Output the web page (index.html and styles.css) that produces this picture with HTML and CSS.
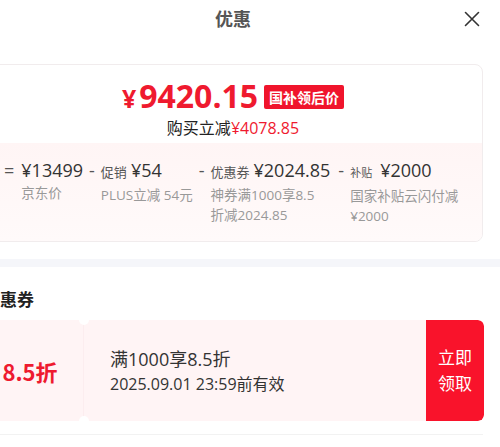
FILE: index.html
```html
<!DOCTYPE html>
<html lang="zh">
<head>
<meta charset="utf-8">
<link rel="stylesheet" href="styles.css">
</head>
<body>
<div class="page">
  <div class="header">
    <span></span>
    <div class="title">优惠</div>
    <button class="close" aria-label="关闭">
      <svg width="16" height="16" viewBox="0 0 16 16"><path d="M1.5 1.5 L14.5 14.5 M14.5 1.5 L1.5 14.5" stroke="#333" stroke-width="1.6" fill="none" stroke-linecap="round"/></svg>
    </button>
  </div>

  <div class="card">
    <div class="card-top">
      <div class="price-line">
        <span class="price"><span class="yen">¥</span>9420.15</span>
        <span class="tag">国补领后价</span>
      </div>
      <div class="buy">购买立减<span class="red">¥4078.85</span></div>
    </div>
    <div class="card-bottom">
      <span class="op">=</span>
      <div class="item">
        <div class="val">¥13499</div>
        <div class="sub">京东价</div>
      </div>
      <span class="op">-</span>
      <div class="item">
        <div class="val"><span class="lbl">促销</span>¥54</div>
        <div class="sub">PLUS立减 54元</div>
      </div>
      <span class="op">-</span>
      <div class="item w3">
        <div class="val"><span class="lbl">优惠券</span>¥2024.85</div>
        <div class="sub">神券满1000享8.5折减2024.85</div>
      </div>
      <span class="op">-</span>
      <div class="item w4">
        <div class="val"><span class="lbl sm">补贴</span>¥2000</div>
        <div class="sub">国家补贴云闪付减¥2000</div>
      </div>
    </div>
  </div>

  <div class="band"></div>

  <div class="section-title">优惠券</div>

  <div class="coupon">
    <div class="c-left"><span>8.5折</span></div>
    <div class="c-mid">
      <div class="c-name">满1000享8.5折</div>
      <div class="c-date">2025.09.01 23:59前有效</div>
    </div>
    <div class="c-btn">立即<br>领取</div>
  </div>
  <div class="rule"></div>
</div>
</body>
</html>
```

FILE: styles.css
```css
* { box-sizing: border-box; }
html, body { margin: 0; padding: 0; background: #fff; overflow: hidden; }
body { font-family: "Open Sans", "Noto Sans CJK SC", sans-serif; color: #333; }

.page { width: 500px; margin-left: -17px; }

.header {
  height: 36px;
  display: grid;
  grid-template-columns: 1fr auto 1fr;
  align-items: center;
}
.title { font-family: "Noto Sans CJK SC", sans-serif; font-size: 18px; font-weight: 700; color: #555; line-height: 24px; }
.close {
  justify-self: end;
  margin-right: 3px;
  margin-top: 1px;
  width: 16px; height: 16px;
  padding: 0; border: 0; background: none;
  display: flex;
}

.card {
  margin-top: 28px;
  border: 1px solid #f1eced;
  border-radius: 8px;
  overflow: hidden;
}
.card-top {
  height: 78px;
  display: flex;
  flex-direction: column;
  align-items: center;
  padding-top: 12px;
}
.price-line { display: flex; align-items: center; height: 40px; }
.price { color: #ef1a2f; font-size: 32px; font-weight: 700; line-height: 40px; }
.yen { font-size: 25px; margin-right: 3px; }
.tag {
  font-family: "Noto Sans CJK SC", sans-serif;
  margin-left: 6px;
  background: #f0142c;
  color: #fff;
  font-size: 14px;
  font-weight: 700;
  line-height: 24px;
  padding: 0 5px;
  border-radius: 2px;
}
.buy { font-size: 16px; line-height: 20px; color: #222; margin-top: 1px; }
.red { color: #ef1a2f; }

.card-bottom {
  background: linear-gradient(#fff5f5, #fffafa);
  padding: 15px 20px 15px 20px;
  height: 98px;
  display: flex;
  align-items: flex-start;
}
.op { font-size: 18px; line-height: 24px; color: #555; margin: 0 5px 0 0; }
.op:first-child { margin-right: 7px; }
.item + .op { margin-left: 6px; margin-right: 6px; }
.val { font-size: 18px; line-height: 24px; color: #333; white-space: nowrap; }
.lbl { font-size: 13px; color: #555; margin-right: 4px; }
.lbl.sm { font-size: 11px; margin-right: 8px; }
.sub { font-size: 13.5px; line-height: 20px; color: #999; margin-top: 1px; }
.item:nth-of-type(2) .sub, .item:first-of-type .sub { white-space: nowrap; }
.w3 { width: 122px; }
.w4 { width: 112px; }
.w3 .sub { width: 114px; }

.band { margin-top: 17px; height: 8px; width: 517px; background: #f5f6fa; }

.section-title {
  font-family: "Noto Sans CJK SC", sans-serif;
  margin-top: 20px;
  font-size: 17px;
  font-weight: 700;
  line-height: 24px;
  color: #222;
}

.coupon {
  margin-top: 9px;
  height: 101px;
  width: 501px;
  display: flex;
  border-radius: 6px;
  overflow: hidden;
  background: #fff4f5;
}
.c-left {
  width: 101px;
  position: relative;
  display: flex;
  align-items: center;
  justify-content: center;
  border-right: 1px solid #fcedef;
}
.c-left span { font-family: "Noto Sans CJK SC", sans-serif; color: #ee1a2f; font-size: 22px; font-weight: 700; line-height: 30px; margin-right: 6px; }
.c-left::before, .c-left::after {
  content: "";
  position: absolute;
  right: -6px;
  width: 10px; height: 10px;
  border-radius: 50%;
  background: #fff;
}
.c-left::before { top: -5px; }
.c-left::after { bottom: -5px; }
.c-mid {
  flex: 1;
  padding-left: 26px;
  display: flex;
  flex-direction: column;
  justify-content: center;
  gap: 2px;
}
.c-name { font-size: 18px; line-height: 24px; color: #333; }
.c-date { font-size: 16px; line-height: 22px; color: #333; }
.c-btn {
  font-family: "Noto Sans CJK SC", sans-serif;
  width: 58px;
  background: #f9132b;
  color: #fff;
  font-size: 17px;
  line-height: 26px;
  display: flex;
  align-items: center;
  justify-content: center;
  text-align: center;
  border-radius: 0 6px 6px 0;
  padding-bottom: 2px;
}
.rule { margin-top: 13px; height: 1px; background: #f2f2f2; }
```
